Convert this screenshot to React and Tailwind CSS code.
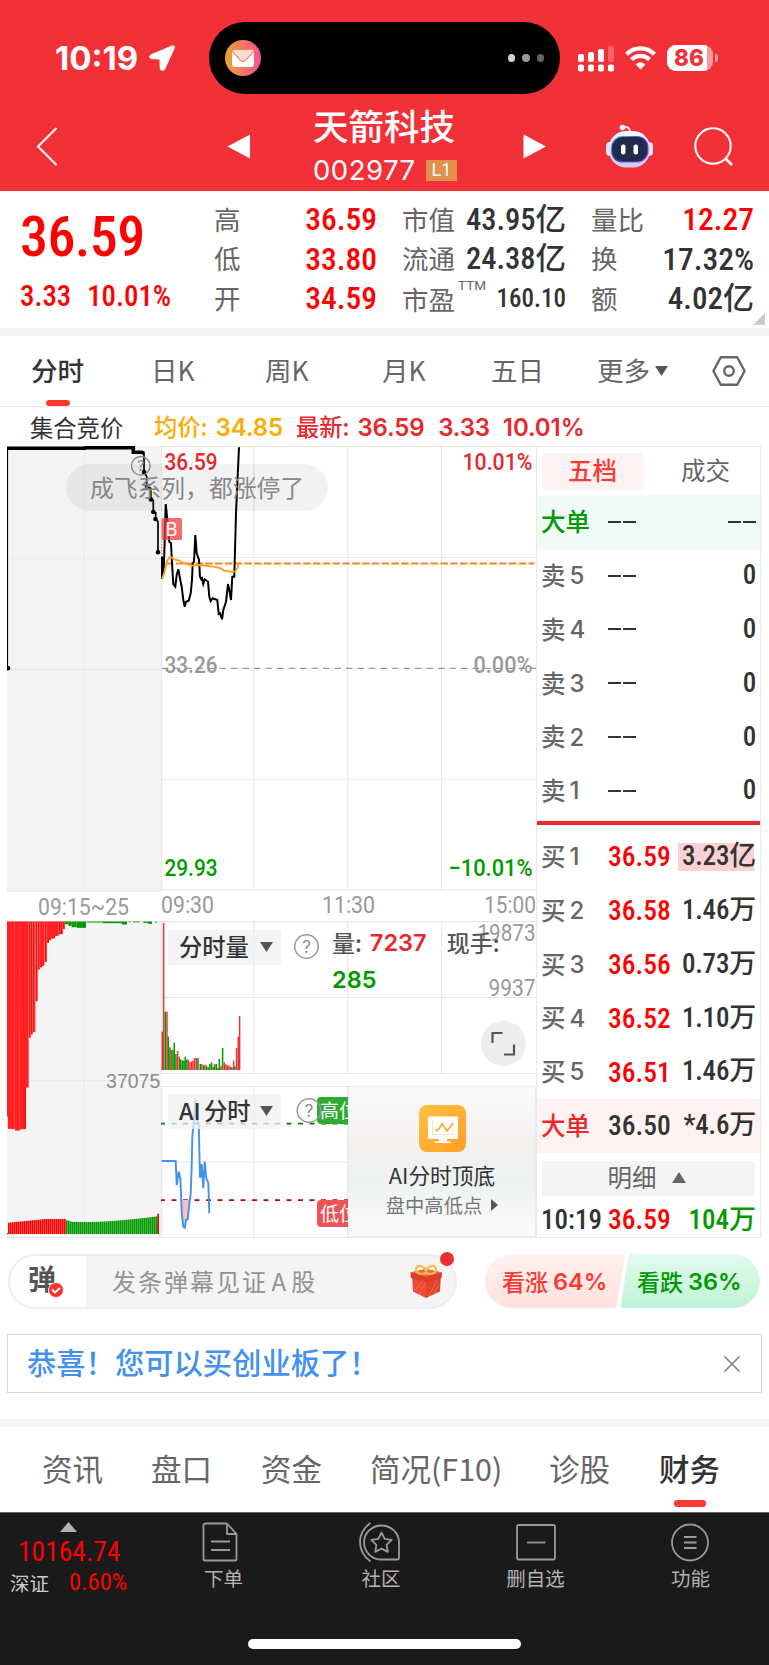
import React from "react";

const DIN = "font-['Roboto','Noto_Sans_CJK_SC',sans-serif] [font-stretch:85%]";

/* ---------- status bar ---------- */
function StatusBar() {
  return (
    <div className="flex h-[94px] items-start pt-[22px]">
      <div className="flex h-[72px] w-[209px] items-center pl-[55px]">
        <span className="w-[87px] whitespace-nowrap font-['Inter',sans-serif] text-[33px] font-bold leading-none text-white">10:19</span>
        <svg className="ml-[7px] h-[26px] w-[26px]" viewBox="0 0 26 26" fill="#fff" stroke="#fff" strokeWidth="1" strokeLinejoin="round">
          <path d="M23.200.9 2 9.800C.2 10.700.4 13.300 2.400 13.500L11 14.100 11.200 23.200C11.300 25.800 14.700 26.300 15.700 24L25.200 3.300C26 1.500 24.800.1 23.200.9Z" />
        </svg>
      </div>
      <div className="flex h-[72px] w-[351px] items-center justify-between rounded-full bg-black pl-[16px] pr-[16px]">
        <svg className="h-9 w-9" viewBox="0 0 36 36">
          <defs>
            <linearGradient id="mail" x1="0" x2="1">
              <stop offset="0" stopColor="#eaa42c" />
              <stop offset="1" stopColor="#fb4f92" />
            </linearGradient>
          </defs>
          <circle cx="18" cy="18" r="18" fill="url(#mail)" />
          <rect x="7" y="9" width="22" height="18" rx="3" fill="#fff" />
          <path d="M8 9.500h20c.9.8.9 1.600.3 2.300l-7.800 8.600c-1.400 1.500-3.600 1.500-5 0L7.700 11.800c-.6-.7-.6-1.500.3-2.300Z" fill="#fddcd6" stroke="#f3845c" strokeWidth="1.200" />
        </svg>
        <div className="flex gap-[7px]">
          <i className="h-[7.500px] w-[7.500px] rounded-full bg-[#d0d0d0]" />
          <i className="h-[7.500px] w-[7.500px] rounded-full bg-[#9a9a9a]" />
          <i className="h-[7.500px] w-[7.500px] rounded-full bg-[#666]" />
        </div>
      </div>
      <div className="flex h-[72px] flex-1 items-center pl-[18px]">
        <svg className="h-[27px] w-[36px]" viewBox="0 0 36 27" fill="#fff">
          <rect x="0" y="9" width="6" height="8" rx="2" />
          <rect x="10" y="7" width="6" height="10" rx="2" />
          <rect x="20" y="4" width="6" height="13" rx="2" />
          <rect x="30" y="1" width="6" height="16" rx="2" opacity=".25" />
          <rect x="0" y="19.500" width="6" height="7" rx="2" />
          <rect x="10" y="19.500" width="6" height="7" rx="2" />
          <rect x="20" y="19.500" width="6" height="7" rx="2" />
          <rect x="30" y="19.500" width="6" height="7" rx="2" />
        </svg>
        <svg className="ml-[11px] h-[24px] w-[31px]" viewBox="0 0 31 24" fill="none" stroke="#fff" strokeWidth="4.200">
          <path d="M1.500 8.300C9.500 0.500 21.500 0.500 29.500 8.300" />
          <path d="M6.500 13.600C11.600 8.600 19.400 8.600 24.500 13.600" />
          <path d="M15.500 23.500 10.700 18.400C13.500 15.900 17.500 15.900 20.300 18.400Z" fill="#fff" stroke="none" />
        </svg>
        <div className="ml-[11px] flex h-[26px] w-[46px] items-center overflow-hidden rounded-[9px] bg-[#f9979b]">
          <div className="flex h-full w-[40px] items-center justify-center bg-white pl-[4px] font-['Inter',sans-serif] text-[22.500px] font-extrabold leading-none text-[#f23037]">86</div>
        </div>
        <div className="ml-[2px] h-[8px] w-[3px] rounded-r-full bg-[#f9979b]" />
      </div>
    </div>
  );
}

function Robot() {
  return (
    <svg className="h-[44px] w-[47px]" viewBox="0 0 47 44">
      <defs>
        <linearGradient id="bot" x1="0" y1="0" x2="0" y2="1">
          <stop offset="0" stopColor="#fbfbff" />
          <stop offset="1" stopColor="#c9cdf0" />
        </linearGradient>
        <linearGradient id="rim" x1="0" y1="0" x2="1" y2="1">
          <stop offset="0" stopColor="#58c8e8" />
          <stop offset=".5" stopColor="#5a3fb0" />
          <stop offset="1" stopColor="#a04df0" />
        </linearGradient>
      </defs>
      <path d="M17 3.500C21 2 24 4 24 8" fill="none" stroke="#e3e4f4" strokeWidth="2" />
      <circle cx="16.500" cy="3.500" r="2.800" fill="#f0f1fb" />
      <rect x="0" y="18" width="8" height="14" rx="4" fill="#dcdff5" />
      <rect x="39" y="18" width="8" height="14" rx="4" fill="#dcdff5" />
      <rect x="3" y="7" width="41" height="36.500" rx="17" fill="url(#bot)" />
      <rect x="5.500" y="12.500" width="36.500" height="25.500" rx="11" fill="#1f2a4c" stroke="url(#rim)" strokeWidth="1.200" />
      <rect x="15" y="20.500" width="4.500" height="10" rx="2" fill="#fff" />
      <rect x="27.500" y="20.500" width="4.500" height="10" rx="2" fill="#fff" />
    </svg>
  );
}

function TitleBar() {
  return (
    <div className="flex h-[97px] items-start">
      <div className="flex w-[313px] items-start pl-[36px] pt-[33px]">
        <svg className="h-[39px] w-[22px]" viewBox="0 0 22 39" fill="none" stroke="#fff" strokeWidth="2">
          <path d="M20.500 1 2 19.500 20.500 38" />
        </svg>
        <svg className="ml-[169px] mt-[7px] h-[25px] w-[24px]" viewBox="0 0 24 25" fill="#fff">
          <path d="M23 .5v24L.5 12.500Z" />
        </svg>
      </div>
      <div className="flex w-[145px] flex-col items-start pt-[13px]">
        <div className="whitespace-nowrap font-['Noto_Sans_CJK_SC',sans-serif] text-[35.500px] font-medium leading-[36px] text-white">天箭科技</div>
        <div className="mt-[14px] flex items-center whitespace-nowrap">
          <span className="w-[113px] font-['Inter',sans-serif] text-[27.500px] leading-[26px] tracking-[0.500px] text-white">002977</span>
          <span className="flex h-[21px] w-[31px] items-center justify-center bg-[#e2904b] font-['Roboto',sans-serif] text-[18px] leading-none text-white">L1</span>
        </div>
      </div>
      <div className="flex items-start pl-[65px] pt-[31px]">
        <svg className="mt-[9px] h-[25px] w-[24px]" viewBox="0 0 24 25" fill="#fff">
          <path d="M.5 .5v24L23 12.500Z" />
        </svg>
        <div className="ml-[59px] mt-[-1px]"><Robot /></div>
        <svg className="ml-[41px] mt-[2px] h-[40px] w-[40px]" viewBox="0 0 40 40" fill="none" stroke="#fff" strokeWidth="2">
          <circle cx="19" cy="19" r="17.700" />
          <path d="m31 31 7 7" strokeWidth="2.600" />
        </svg>
      </div>
    </div>
  );
}

/* ---------- quote ---------- */
function Cell({ label, sup, value, tone = "text-[#333]", size = "text-[31.500px]" }) {
  return (
    <div className="flex h-[39.500px] items-center justify-between whitespace-nowrap">
      <span className={`flex font-['Noto_Sans_CJK_SC',sans-serif] text-[26.500px] leading-none text-[#666] ${sup ? "mt-[1px]" : "mt-[-2px]"}`}>
        {label}
        {sup && <sup className="top-0 ml-[3px] mt-[-7px] font-['Roboto',sans-serif] text-[13.500px] leading-none">{sup}</sup>}
      </span>
      <span className={`${DIN} font-medium leading-none ${size} ${tone}`}>{value}</span>
    </div>
  );
}

function Quote() {
  return (
    <div className="relative flex h-[137px] bg-white pt-[9px]">
      <div className="w-[214px] pl-[20px] pt-[14px]">
        <div className={`${DIN} h-[46px] text-[56px] font-medium leading-[46px] tracking-[-0.600px] text-[#f00]`}>36.59</div>
        <div className={`${DIN} mt-[22px] flex gap-[16px] whitespace-nowrap text-[28.800px] font-medium leading-[28px] text-[#f00]`}>
          <span>3.33</span>
          <span>10.01%</span>
        </div>
      </div>
      <div className="w-[163px]">
        <Cell label="高" value="36.59" tone="text-[#f00]" />
        <Cell label="低" value="33.80" tone="text-[#f00]" />
        <Cell label="开" value="34.59" tone="text-[#f00]" />
      </div>
      <div className="ml-[25px] w-[164px]">
        <Cell label="市值" value="43.95亿" size="text-[30.500px]" />
        <Cell label="流通" value="24.38亿" size="text-[30.500px]" />
        <Cell label="市盈" sup="TTM" value="160.10" size="text-[25px]" />
      </div>
      <div className="ml-[25px] w-[163px]">
        <Cell label="量比" value="12.27" tone="text-[#f00]" />
        <Cell label="换" value="17.32%" />
        <Cell label="额" value="4.02亿" size="text-[31px]" />
      </div>
      <svg className="absolute bottom-[3px] right-[4px] h-3 w-3" viewBox="0 0 12 12" fill="#ccc"><path d="M12 0v12H0Z" /></svg>
    </div>
  );
}

function PeriodTabs() {
  return (
    <div className="flex h-[71px] border-b border-[#e8e8e8] bg-white font-['Noto_Sans_CJK_SC',sans-serif] text-[26.500px] leading-none text-[#666]">
      <div className="flex w-[121px] flex-col pl-[31px] pt-[21px] font-medium text-[#333]">
        <span>分时</span>
        <i className="ml-[15px] mt-[16px] h-[6px] w-[24px] rounded-[3px] bg-[#fd3a32]" />
      </div>
      <span className="ml-[30px] w-[114px] pt-[21px]">日K</span>
      <span className="w-[117px] pt-[21px]">周K</span>
      <span className="w-[109px] pt-[21px]">月K</span>
      <span className="w-[106px] pt-[21px]">五日</span>
      <span className="flex w-[115px] pt-[21px]">
        更多
        <svg className="ml-[5px] mt-[9px] h-[10px] w-[13px]" viewBox="0 0 13 10" fill="#555"><path d="M0 0h13L6.500 10Z" /></svg>
      </span>
      <svg className="mt-[20px] h-[30px] w-[34px]" viewBox="0 0 34 30" fill="none" stroke="#666" strokeWidth="2.400">
        <path d="M8.800 1.200h16.400L32.600 15 25.200 28.800H8.800L1.400 15Z" strokeLinejoin="round" />
        <circle cx="17" cy="15" r="4.800" />
      </svg>
    </div>
  );
}

function Legend() {
  return (
    <div className="flex h-[39px] items-center whitespace-nowrap bg-white pl-[30px] font-['Noto_Sans_CJK_SC',sans-serif] text-[23.300px] leading-none">
      <span className="w-[124px] pt-[2px] text-[#333]">集合竞价</span>
      <span className="flex w-[142px] items-center font-medium text-[#fdab00]">均价:<b className="ml-[8px] mt-[2px] font-['Inter',sans-serif] text-[24px] font-semibold tracking-[-0.100px]">34.85</b></span>
      <span className="flex items-center font-medium text-[#e8282d]">最新:<b className="ml-[8px] mt-[2px] font-['Inter',sans-serif] text-[24px] font-semibold tracking-[-0.200px]">36.59</b></span>
      <b className="ml-[14px] mt-[2px] font-['Inter',sans-serif] text-[24px] font-semibold tracking-[-0.200px] text-[#e8282d]">3.33</b>
      <b className="ml-[13px] mt-[2px] font-['Inter',sans-serif] text-[24px] font-semibold tracking-[-0.100px] text-[#e8282d]">10.01%</b>
    </div>
  );
}

/* ---------- chart ---------- */
const p = (pts, oy) => pts.trim().split(/\s+/).map((s) => { const [x, y] = s.split(","); return `${(x / 3).toFixed(1)},${(oy + y / 3).toFixed(1)}`; }).join(" ");

const PRICE = p("486,446 486,380 490,430 493,370 497,222 500,250 505,300 508,335 513,340 516,400 520,462 526,470 530,435 535,418 541,450 545,470 550,510 554,530 558,515 566,512 572,490 576,450 578,400 582,395 586,315 590,370 597,390 600,440 604,448 606,445 610,462 614,448 624,455 628,500 632,513 638,505 652,510 656,552 660,550 666,568 670,540 678,515 684,462 688,480 693,510 697,440 703,440 708,250 717,52", 430);
const AVG = p("486,445 493,430 500,395 508,382 515,382 522,388 534,390 550,398 575,407 600,405 640,410 660,414 670,421 690,425 705,425 712,415 717,397", 430);
const AUCTION = p("22,715 22,55", 430);
const TOPLINE = p("20,55 255,55 256,53 400,53 400,67 426,67 432,70", 430);
const STEPS = p("432,67 432,125 440,140 440,170 452,175 453,208 460,212 460,246 467,248 467,268 474,275 474,367", 430);
const AI = p("485,903 527,903 529,945 530,975 536,935 541,955 543,1000 545,1060 550,1100 555,1103 558,1080 563,1078 567,1040 572,1000 575,920 577,830 580,800 586,718 590,780 596,790 600,950 603,950 605,912 608,960 610,985 614,905 619,955 625,968 628,1060", 860);
const AIFILL = p("544,1020 546,1060 550,1100 555,1103 558,1080 563,1078 568,1020", 860);

const HANG = [[20, 24, 770], [24, 45, 806], [45, 60, 811], [60, 78, 807], [78, 86, 682], [86, 92, 533], [92, 98, 523], [98, 106, 516], [106, 113, 423], [113, 120, 328], [120, 126, 322], [126, 133, 317], [133, 141, 305], [141, 147, 248], [147, 153, 240], [153, 165, 235], [165, 176, 227], [176, 188, 222], [188, 195, 207]];
const HANG_G = [[195, 205, 192], [205, 215, 197], [215, 230, 201], [230, 258, 203], [260, 308, 187], [308, 365, 189], [365, 381, 193], [386, 393, 186], [398, 420, 186], [430, 444, 188], [444, 456, 191], [465, 470, 187]];
const VOL = [[487, 515, 1], [491, 188, 1], [496, 455, 0], [501, 455, 1], [505, 530, 0], [510, 562, 0], [514, 570, 1], [519, 569, 0], [523, 548, 0], [528, 582, 0], [533, 573, 1], [538, 590, 1], [542, 598, 0], [547, 601, 0], [552, 602, 0], [556, 590, 0], [561, 598, 0], [565, 600, 1], [570, 606, 1], [575, 605, 1], [579, 602, 1], [584, 594, 1], [589, 594, 1], [594, 594, 0], [601, 612, 0], [606, 612, 1], [611, 617, 0], [615, 614, 1], [620, 617, 0], [625, 622, 0], [630, 612, 0], [635, 607, 0], [640, 620, 1], [644, 613, 0], [649, 612, 0], [654, 624, 0], [658, 597, 0], [663, 618, 1], [668, 564, 0], [673, 607, 1], [678, 613, 1], [682, 617, 1], [687, 616, 1], [692, 620, 1], [696, 622, 0], [701, 602, 1], [705, 619, 0], [710, 564, 1], [715, 530, 1], [719, 468, 1]];

const lower = [];
for (let i = 0; i < 75; i++) {
  const x = 24 + i * 6;
  const red = x < 195;
  const top = red ? 1088 - Math.min(11, (x - 24) / 10) : x < 215 ? 1080 + (x - 195) / 3.500 : x < 270 ? 1086 : 1086 - Math.pow((x - 270) / 200, 1.500) * 17;
  lower.push({ x, top, red });
}

function Label({ x, y, w, fill = "#999", size = 23.500, weight = 500, anchor = "start", children }) {
  return (
    <text x={x} y={y} textLength={w} lengthAdjust="spacingAndGlyphs" fill={fill} fontSize={size} fontWeight={weight} textAnchor={anchor} fontFamily="Roboto, sans-serif">{children}</text>
  );
}

function Help({ x, y }) {
  return (
    <g>
      <circle cx={x} cy={y} r="11.800" fill="none" stroke="#999" strokeWidth="1.500" />
      <text x={x} y={y + 6} textAnchor="middle" fontSize="17" fill="#888" fontFamily="Inter, sans-serif">?</text>
    </g>
  );
}

function Chart() {
  return (
    <svg className="h-[792px] w-[529px]" viewBox="7 446 529 792">
      <rect x="7" y="446" width="154" height="445" fill="#f4f4f4" />
      <rect x="7" y="921" width="154" height="316" fill="#f4f4f4" />
      <g stroke="#e6e6e6" strokeWidth="1" strokeDasharray="2 2">
        <path d="M84 446V891M7 558.500H161M84 921V1237M7 1080.500H161" />
        <path d="M7 669.500H161" strokeDasharray="none" />
      </g>
      <g stroke="#e8e8e8" strokeWidth="1.200" fill="none">
        <path d="M161.500 446V890M254 446V890M347.700 446V890M441.500 446V890M161 446.500H536M161 557.500H536M161 779.500H536M161 889.600H536M7 891H161" />
        <path d="M161.500 921V1073M254 921V1073M347.700 921V1073M441.500 921V1073M7 921.700H536M161 997.500H536M161 1073.500H536" />
        <path d="M161.500 1086V1237M254 1086V1237M347.700 1086V1237M161 1086.500H536M161 1162H536M7 1237.500H536" />
      </g>
      <path d="M161 446H536" stroke="#ead9bd" strokeWidth="1.300" strokeDasharray="6 5" />
      <path d="M162 668.300H536" stroke="#999" strokeWidth="1.300" strokeDasharray="6.500 5" />
      <path d="M166 563.500H534.500" stroke="#fb8420" strokeWidth="2" strokeDasharray="7.500 2.300" />

      <polyline points={AUCTION} fill="none" stroke="#000" strokeWidth="1.600" />
      <polyline points={TOPLINE} fill="none" stroke="#000" strokeWidth="3.600" />
      <polyline points={STEPS} fill="none" stroke="#000" strokeWidth="1.700" />
      {[[8, 668.300], [144, 472], [147, 486.500], [151, 499.500], [153.300, 512], [155.500, 519], [158, 552.300]].map(([x, y]) => <circle key={y} cx={x} cy={y} r="2.300" />)}
      <g>
        <circle cx="140.800" cy="465.800" r="9.300" fill="none" stroke="#888" strokeWidth="1.300" />
        <text x="140.800" y="471" textAnchor="middle" fontSize="14" fill="#888" fontFamily="Inter, sans-serif">?</text>
      </g>
      <path d="M161.800 541V564" stroke="#f66" strokeWidth="1.200" strokeDasharray="1.500 1.500" />
      <rect x="162" y="562" width="3" height="6" fill="#e8282d" />
      <polyline points={PRICE} fill="none" stroke="#000" strokeWidth="2" />
      <polyline points={AVG} fill="none" stroke="#ff9f1a" strokeWidth="1.800" />
      <rect x="161.500" y="518" width="20.500" height="22" rx="1.500" fill="#ee3b40" opacity=".75" />
      <text x="165.500" y="536" fontSize="18.500" fill="#fff" fontFamily="Inter, sans-serif">B</text>

      <Label x="164.500" y="469.500" w="53" fill="#e8282d">36.59</Label>
      <Label x="532.500" y="469.500" w="70" fill="#e8282d" anchor="end">10.01%</Label>
      <Label x="164.500" y="673" w="53">33.26</Label>
      <Label x="532.500" y="673" w="59" anchor="end">0.00%</Label>
      <Label x="164.500" y="876" w="53" fill="#090">29.93</Label>
      <Label x="532.500" y="876" w="84" fill="#090" anchor="end">−10.01%</Label>
      <Label x="38" y="914.500" w="91" weight="400">09:15~25</Label>
      <Label x="161" y="913" w="53" weight="400">09:30</Label>
      <Label x="322" y="913" w="53" weight="400">11:30</Label>
      <Label x="484" y="913" w="52" weight="400">15:00</Label>

      <g fill="#f00">
        {HANG.map(([a, b, y]) => <rect key={a} x={a / 3} y="921.500" width={(b - a) / 3} height={(y - 184) / 3} />)}
      </g>
      <g stroke="#f88" strokeWidth=".5">
        {HANG.flatMap(([a, b, y]) => { const o = []; for (let x = a; x < b; x += 6) o.push(<path key={x} d={`M${x / 3} 921.500V${860 + y / 3}`} />); return o; })}
      </g>
      <g fill="#090">
        {HANG_G.map(([a, b, y]) => <rect key={a} x={a / 3} y="921.500" width={(b - a) / 3} height={Math.max(0.800, (y - 184) / 3)} />)}
      </g>
      <rect x="7" y="1233" width="1.500" height="1.200" fill="#f00" />
      {lower.map((b) => <rect key={b.x} x={b.x / 3} y={860 + b.top / 3} width="1.700" height={(1122 - b.top) / 3} fill={b.red ? "#f00" : "#090"} />)}
      <rect x="157.300" y="1213.700" width="1.700" height="20.300" fill="#f00" />
      <text x="160.300" y="1087.500" textAnchor="end" fontSize="19.500" fill="#8c8c8c" fontFamily="Liberation Sans, sans-serif">37075</text>

      {VOL.map(([x, y, r]) => <rect key={x} x={x / 3 - 0.800} y={860 + y / 3} width="1.500" height={(630 - y) / 3} fill={r ? "#ea3338" : "#090"} />)}
      <Label x="535.500" y="941" w="58" anchor="end" weight="400">19873</Label>
      <Label x="535.500" y="996" w="47" anchor="end" weight="400">9937</Label>
      <Help x={306.500} y={946.500} />

      <path d="M161 1123.700H348" stroke="#0a7a0a" strokeWidth="1.800" strokeDasharray="5 6.500" strokeDashoffset="1" />
      <path d="M161 1200.200H348" stroke="#c00" strokeWidth="1.800" strokeDasharray="5 6.500" strokeDashoffset="1" />
      <polygon points={AIFILL} fill="#fbc0c4" />
      <polyline points={AI} fill="none" stroke="#4291ee" strokeWidth="1.900" />
      <circle cx="503.300" cy="1043.500" r="22.500" fill="#ededed" />
      <path d="M492.500 1043V1033H502.500M514 1044.500V1054.500H504" fill="none" stroke="#555" strokeWidth="2.200" />
    </svg>
  );
}

function Selector({ label, gap }) {
  return (
    <div className="flex h-[34.500px] items-center rounded-[3px] bg-[#f0f0f0]/75 pl-[11px] pr-[8.500px]">
      <span className="mt-[-2px] whitespace-nowrap font-['Noto_Sans_CJK_SC',sans-serif] text-[23.300px] font-medium leading-none text-[#333] [word-spacing:-2px]">{label}</span>
      <svg className={`h-[10px] w-[13px] ${gap}`} viewBox="0 0 13 10" fill="#555"><path d="M0 0h13L6.500 10Z" /></svg>
    </div>
  );
}

function AiPromo() {
  return (
    <div className="absolute left-[341px] top-[640px] flex h-[151px] w-[188px] flex-col items-center border border-[#ececec] bg-[linear-gradient(180deg,#fafafa_0%,#f4f0f0_40%,#ecf1ef_62%,#fafafa_95%)] font-['Noto_Sans_CJK_SC',sans-serif] leading-none">
      <svg className="mt-[18px] h-[47px] w-[47px]" viewBox="0 0 47 47">
        <defs>
          <linearGradient id="mon" x1="0" y1="0" x2="1" y2="1">
            <stop offset="0" stopColor="#ffc244" />
            <stop offset="1" stopColor="#ff9e26" />
          </linearGradient>
        </defs>
        <rect width="47" height="47" rx="8" fill="url(#mon)" />
        <rect x="9" y="11.500" width="30" height="22.500" rx="1.500" fill="#fff" />
        <path d="M20 34h8v2.500h4V38H15.500v-1.500H20Z" fill="#fff" />
        <path d="M13.500 15v14.500H35" fill="none" stroke="#fbe3bd" strokeWidth="1" />
        <path d="m16.500 26 3.500-2 3-5.500 5 7.500 6-8" fill="none" stroke="#fba62c" strokeWidth="1.600" />
      </svg>
      <div className="mt-[12px] whitespace-nowrap text-[21.700px] text-[#333]">AI分时顶底</div>
      <div className="mt-[10px] flex items-center whitespace-nowrap text-[19.300px] text-[#777]">
        盘中高低点
        <svg className="ml-[9px] h-[12px] w-[7px]" viewBox="0 0 7 12" fill="#555"><path d="M0 0v12L7 6Z" /></svg>
      </div>
    </div>
  );
}

function ChartArea() {
  return (
    <div className="relative w-[529px]">
      <Chart />
      <div className="absolute left-[59px] top-[18px] flex h-[47px] w-[262px] items-center justify-center whitespace-nowrap rounded-full bg-black/5 pb-[2px] font-['Noto_Sans_CJK_SC',sans-serif] text-[23.800px] leading-none text-[#888]">成飞系列，都涨停了</div>
      <div className="absolute left-[161px] top-[484px]"><Selector label="分时量" gap="ml-[11px]" /></div>
      <div className="absolute left-[325px] top-[477px] flex w-[204px] flex-wrap items-center font-['Noto_Sans_CJK_SC',sans-serif] text-[23px] font-medium leading-[38px] text-[#555]">
        <span>量:</span>
        <b className="ml-[8px] mt-[2px] w-[77px] font-['Inter',sans-serif] text-[23.500px] font-semibold leading-[36px] text-[#e8282d]">7237</b>
        <span>现手:</span>
        <b className="w-full font-['Inter',sans-serif] text-[23.500px] font-semibold text-[#090]">285</b>
      </div>
      <div className="absolute left-[310px] top-[651px] flex h-[27px] w-[31px] items-center overflow-hidden whitespace-nowrap rounded-l-[4px] bg-[#2fab33] pb-[2px] pl-[3px] font-['Noto_Sans_CJK_SC',sans-serif] text-[19px] leading-none text-white">高位</div>
      <div className="absolute left-[310px] top-[754px] flex h-[27px] w-[31px] items-center overflow-hidden whitespace-nowrap rounded-l-[4px] bg-[#ed5256] pb-[2px] pl-[3px] font-['Noto_Sans_CJK_SC',sans-serif] text-[19px] leading-none text-white">低位</div>
      <svg className="absolute left-[288px] top-[651px] h-[27px] w-[27px]" viewBox="295 1097 27 27"><Help x={309} y={1110.500} /></svg>
      <div className="absolute left-[161px] top-[648px]"><Selector label="AI 分时" gap="ml-[9px]" /></div>
      <AiPromo />
    </div>
  );
}

/* ---------- order book ---------- */
function BookRow({ name, n, price, vol, nameTone = "text-[#666]", priceTone = "text-[#333]", bg = "", mark }) {
  return (
    <div className={`flex h-[53.800px] items-center whitespace-nowrap pl-[4px] pr-[4px] leading-none ${bg}`}>
      <span className={`mt-[-1px] flex w-[67px] items-center font-['Noto_Sans_CJK_SC',sans-serif] text-[24.500px] font-medium ${nameTone}`}>
        {name}
        {n && <b className="ml-[4px] mt-[2px] font-['Inter',sans-serif] text-[24px] font-medium">{n}</b>}
      </span>
      {price === "--" ? <Dashes /> : <span className={`${DIN} mt-[1px] text-[27.500px] font-medium ${priceTone}`}>{price}</span>}
      <span className="flex-1" />
      {vol === "--" ? <Dashes /> : (
        <span className={`${DIN} mt-[1px] pb-[1px] pl-[4px] text-[27px] font-medium tracking-[-0.200px] text-[#333] ${mark ? "bg-[linear-gradient(90deg,#fad2d3_76px,transparent_76px)]" : ""}`}>{vol}</span>
      )}
    </div>
  );
}

function Dashes() {
  return (
    <span className="flex gap-[2px]">
      <i className="h-[2px] w-[13px] bg-[#333]" />
      <i className="h-[2px] w-[13px] bg-[#333]" />
    </span>
  );
}

function OrderBook() {
  return (
    <div className="h-[792px] w-[225px] border border-[#e8e8e8]">
      <div className="flex h-[48px] items-start pl-[5px] pt-[6px] font-['Noto_Sans_CJK_SC',sans-serif] text-[24.500px] leading-none">
        <span className="flex h-[37px] w-[101px] shrink-0 items-center justify-center rounded-[3px] bg-[#fff2f2] pb-[2px] font-medium text-[#fd3a32]">五档</span>
        <span className="flex h-[37px] flex-1 items-center justify-center pb-[2px] pl-[8px] text-[#666]">成交</span>
      </div>
      <BookRow name="大单" price="--" vol="--" nameTone="text-[#090]" bg="bg-[#f1faf6]" />
      {["5", "4", "3", "2", "1"].map((n) => <BookRow key={n} name="卖" n={n} price="--" vol="0" />)}
      <div className="mb-[5px] mt-[3px] h-[4px] bg-[#ea2a2f]" />
      {[["1", "36.59", "3.23亿"], ["2", "36.58", "1.46万"], ["3", "36.56", "0.73万"], ["4", "36.52", "1.10万"], ["5", "36.51", "1.46万"]].map(([n, a, b]) => (
        <BookRow key={n} name="买" n={n} price={a} vol={b} priceTone="text-[#f00]" mark={n === "1"} />
      ))}
      <BookRow name="大单" price="36.50" vol="*4.6万" nameTone="text-[#e8282d]" bg="bg-[#fff2f2]" />
      <div className="mx-[5px] mt-[8px] flex h-[35px] items-center justify-center gap-[15px] bg-[#f4f4f4] pb-[1px] pr-[4px] font-['Noto_Sans_CJK_SC',sans-serif] text-[24.500px] leading-none text-[#666]">
        <span className="mt-[-1px]">明细</span>
        <svg className="h-[11px] w-[14px]" viewBox="0 0 14 11" fill="#666"><path d="M0 11h14L7 0Z" /></svg>
      </div>
      <div className={`${DIN} flex h-[49px] items-center whitespace-nowrap px-[4px] text-[27px] font-medium leading-none`}>
        <span className="w-[67px] text-[#333]">10:19</span>
        <span className="flex-1 text-[27.500px] text-[#f00]">36.59</span>
        <span className="text-[#090]">104万</span>
      </div>
    </div>
  );
}

/* ---------- comment bar ---------- */
function Gift() {
  return (
    <svg className="h-[34px] w-[33px]" viewBox="0 0 33 34">
      <path d="M2 11 16 15V34L3 27.500Z" fill="#ef4a35" />
      <path d="M31 11 16 15V34l14-6.500Z" fill="#e0452c" />
      <path d="M.5 8.500 16 5l16 3.500-.5 5.500L16 18.500 1 14Z" fill="#dc3c2b" />
      <path d="M.5 8.500 16 12.500 32 8.500 16 5Z" fill="#f2634a" />
      <path d="m5 27 8-11M9 30l7-12M18 33l9-16M24 30l5-10" stroke="#f4694a" strokeWidth="1" />
      <path d="M16 9C11 11 5.500 9 6 5c.5-4 8-5 10 3 2-8 9.500-7 10-3 .5 4-5 6-10 4Z" fill="none" stroke="#f5bd3e" strokeWidth="2.200" />
    </svg>
  );
}

function CommentBar() {
  return (
    <div className="flex h-[54px] items-center pl-[8px] font-['Noto_Sans_CJK_SC',sans-serif] leading-none">
      <div className="relative flex h-[55px] w-[449px] items-center rounded-full border-2 border-[#eee] bg-[linear-gradient(90deg,#fff_76px,#f4f4f4_76px)] pl-[18px]">
        <span className="relative mt-[-6px] w-[84px] text-[28px] font-bold text-[#555]">
          弹
          <svg className="absolute left-[20px] top-[18px] h-[16px] w-[16px]" viewBox="0 0 16 16">
            <circle cx="8" cy="8" r="7.500" fill="#f5342f" stroke="#fff" strokeWidth=".8" />
            <path d="m4 7.500 3 3 5-4.500" fill="none" stroke="#fff" strokeWidth="1.900" />
          </svg>
        </span>
        <span className="flex-1 whitespace-nowrap text-[24px] tracking-[2px] text-[#939393] [word-spacing:-4px]">发条弹幕见证 A 股</span>
        <span className="mr-[12px]"><Gift /></span>
        <i className="absolute right-[1px] top-[-4px] h-[14px] w-[14px] rounded-full bg-[#ea3033]" />
      </div>
      <div className="relative ml-[28px] flex h-[54px] w-[275px] items-center">
        <svg className="absolute inset-0 h-[54px] w-[275px]" viewBox="0 0 275 54">
          <defs>
            <linearGradient id="up" x1="0" y1="0" x2="0" y2="1"><stop offset="0" stopColor="#fff1f0" /><stop offset="1" stopColor="#ffe1df" /></linearGradient>
            <linearGradient id="dn" x1="0" y1="0" x2="0" y2="1"><stop offset="0" stopColor="#e2faed" /><stop offset="1" stopColor="#bff3d6" /></linearGradient>
          </defs>
          <path d="M27 0H137Q141 0 140 4L132 50Q131 54 127 54H27A27 27 0 0 1 27 0Z" fill="url(#up)" />
          <path d="M148 0H248A27 27 0 0 1 248 54H139Q135 54 136 50L143 4Q144 0 148 0Z" fill="url(#dn)" />
        </svg>
        <span className="relative flex w-[135px] items-center whitespace-nowrap pl-[17px] text-[23px] font-medium text-[#fd3a32]">看涨<b className="ml-[5px] mt-[1px] font-['Inter',sans-serif] text-[23.500px] font-semibold">64%</b></span>
        <span className="relative flex items-center whitespace-nowrap pl-[17px] text-[23px] font-medium text-[#090]">看跌<b className="ml-[5px] mt-[1px] font-['Inter',sans-serif] text-[23.500px] font-semibold">36%</b></span>
      </div>
    </div>
  );
}

/* ---------- footer ---------- */
function NavItem({ label, children, className }) {
  return (
    <div className={`flex flex-col items-center ${className}`}>
      <svg className="h-[40px] w-[44px]" viewBox="0 0 44 40" fill="none" stroke="#999" strokeWidth="1.800" strokeLinejoin="round">{children}</svg>
      <span className="mt-[6px] whitespace-nowrap font-['Noto_Sans_CJK_SC',sans-serif] text-[19.500px] leading-none text-[#b3b3b3]">{label}</span>
    </div>
  );
}

function Footer() {
  return (
    <div className="flex h-[153px] flex-col items-center border-t border-[#666] bg-[#1a1a1a]">
      <div className="flex h-[126px] w-full pt-[9px]">
        <div className="w-[137px]">
          <svg className="ml-[60px] h-[10px] w-[17px]" viewBox="0 0 17 10" fill="#b3b3b3"><path d="M0 10h17L8.500 0Z" /></svg>
          <div className={`${DIN} ml-[18px] mt-[6px] text-[27.500px] leading-[28px] text-[#f00]`}>10164.74</div>
          <div className="ml-[10px] mt-[4px] flex items-center leading-none">
            <span className="w-[59px] font-['Noto_Sans_CJK_SC',sans-serif] text-[19.500px] text-[#ccc]">深证</span>
            <span className={`${DIN} text-[24.500px] text-[#f00]`}>0.60%</span>
          </div>
        </div>
        <NavItem label="下单" className="w-[173px]">
          <path d="M6 1.500H27.500L37 12V37.500Q37 38.500 36 38.500H5.500Q4 38.500 4 37.500V3Q4 1.500 6 1.500ZM27.500 2V12H37M11.500 19.500H30.500M11.500 28H30.500" transform="translate(-2.500 0)" />
        </NavItem>
        <NavItem label="社区" className="w-[142px]">
          <path d="M24 3.500A17.500 17 0 1 0 24 37.500H40Q41.500 37.500 41.500 36V20.500A17.500 17 0 0 0 24 3.500Z" transform="translate(-1.500 0)" />
          <path d="M13.500 1C-.5 11-.5 29 13.500 39.500" transform="translate(-2 0)" />
          <path d="m24 10.500 3.200 6.400 7 1-5.100 5 1.200 7L24 26.600l-6.300 3.300 1.200-7-5.100-5 7-1Z" transform="translate(-1.500 0)" />
        </NavItem>
        <NavItem label="删自选" className="w-[167px]">
          <rect x="3" y="3" width="38" height="34.500" rx="1.500" />
          <path d="M13 20.500H31.500" />
        </NavItem>
        <NavItem label="功能" className="w-[143px]">
          <circle cx="21" cy="20.500" r="18" />
          <path d="M15 15h12.500M15 20.500h12.500M15 26h12.500" />
        </NavItem>
      </div>
      <div className="h-[10px] w-[273px] rounded-full bg-white" />
    </div>
  );
}

export default function App() {
  return (
    <div className="flex h-[1665px] w-[769px] flex-col overflow-hidden bg-white">
      <div className="h-[191px] shrink-0 bg-[#f23037]">
        <StatusBar />
        <TitleBar />
      </div>
      <Quote />
      <div className="h-[8px] bg-[#f4f4f4]" />
      <PeriodTabs />
      <Legend />
      <div className="flex h-[792px] pl-[7px]">
        <ChartArea />
        <OrderBook />
      </div>
      <div className="pt-[16px]"><CommentBar /></div>
      <div className="mx-[7px] mt-[26px] flex h-[59px] items-center justify-between border border-[#d4d4d4] pl-[19px] pr-[20px] font-['Noto_Sans_CJK_SC',sans-serif]">
        <span className="mt-[-3px] whitespace-nowrap text-[29.300px] font-medium leading-none text-[#4291ee]">恭喜！您可以买创业板了！</span>
        <svg className="h-[16px] w-[18px]" viewBox="0 0 18 16" stroke="#888" strokeWidth="1.700"><path d="m1.500.5 15 15M16.500.5l-15 15" /></svg>
      </div>
      <div className="mt-[26px] h-[8px] bg-[#f4f4f4]" />
      <div className="flex h-[85px] whitespace-nowrap pl-[42px] pt-[26px] font-['Noto_Sans_CJK_SC',sans-serif] text-[30.500px] leading-none text-[#666]">
        <span className="w-[109px]">资讯</span>
        <span className="w-[110px]">盘口</span>
        <span className="w-[109px]">资金</span>
        <span className="w-[179px]">简况(F10)</span>
        <span className="w-[110px]">诊股</span>
        <div className="flex flex-col items-center font-medium text-[#333]">
          <span>财务</span>
          <i className="mt-[16px] h-[7px] w-[32px] rounded-[3px] bg-[#fd3a32]" />
        </div>
      </div>
      <Footer />
    </div>
  );
}
